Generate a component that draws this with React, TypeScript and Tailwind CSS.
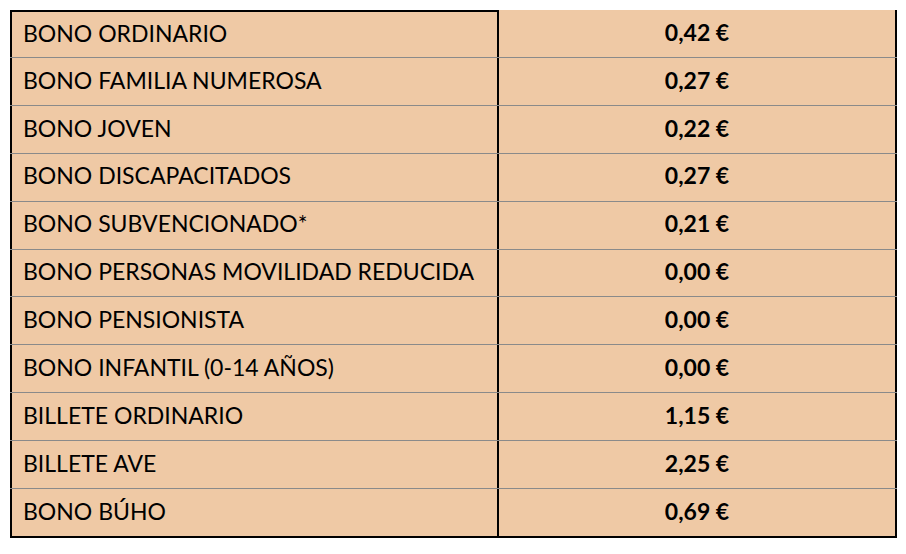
const rows: [string, string][] = [
  ['BONO ORDINARIO', '0,42 €'],
  ['BONO FAMILIA NUMEROSA', '0,27 €'],
  ['BONO JOVEN', '0,22 €'],
  ['BONO DISCAPACITADOS', '0,27 €'],
  ['BONO SUBVENCIONADO*', '0,21 €'],
  ['BONO PERSONAS MOVILIDAD REDUCIDA', '0,00 €'],
  ['BONO PENSIONISTA', '0,00 €'],
  ['BONO INFANTIL (0-14 AÑOS)', '0,00 €'],
  ['BILLETE ORDINARIO', '1,15 €'],
  ['BILLETE AVE', '2,25 €'],
  ['BONO BÚHO', '0,69 €'],
];

export default function App() {
  return (
    <div className="h-[554px] w-[906px] bg-white pl-[10px] pt-[10px] text-black" style={{ fontFamily: 'Lato, "Open Sans", sans-serif' }}>
      <div className="flex h-[528px] w-[887px] flex-col border-b-2 border-black bg-[#efc9a5]">
        {rows.map(([name, price], i) => (
          <div key={name} className={`flex flex-1 ${i > 0 ? 'border-t border-[#8a8a8a]' : ''}`}>
            <div className={`flex w-[489px] items-center border-l-2 border-r-2 border-black pb-[3px] pl-[11px] text-[23px] ${i === 0 ? 'border-t-2' : ''}`}>
              {name}
            </div>
            <div className="flex flex-1 items-center justify-center border-r-2 border-black pb-[3px] text-[23px] font-bold">
              {price}
            </div>
          </div>
        ))}
      </div>
    </div>
  );
}
